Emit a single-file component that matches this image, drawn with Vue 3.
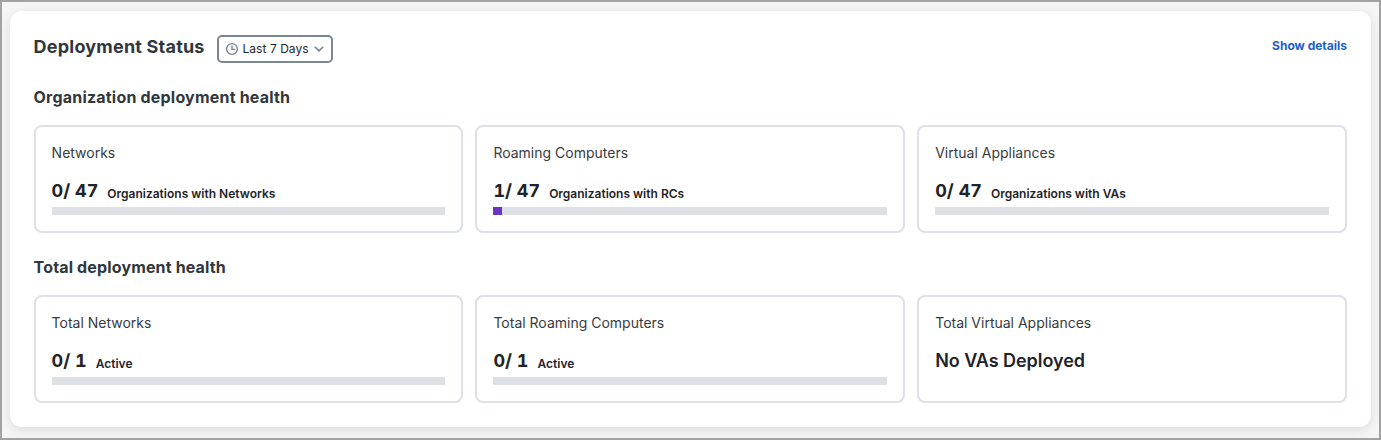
<script setup>
const sections = [
  {
    title: 'Organization deployment health',
    kind: 'organization',
    cards: [
      { name: 'Networks', count: 0, total: 47, label: 'Organizations with Networks' },
      { name: 'Roaming Computers', count: 1, total: 47, label: 'Organizations with RCs' },
      { name: 'Virtual Appliances', count: 0, total: 47, label: 'Organizations with VAs' },
    ],
  },
  {
    title: 'Total deployment health',
    kind: 'total',
    cards: [
      { name: 'Total Networks', count: 0, total: 1, label: 'Active' },
      { name: 'Total Roaming Computers', count: 0, total: 1, label: 'Active' },
      { name: 'Total Virtual Appliances', empty: 'No VAs Deployed' },
    ],
  },
]

const fill = (card) => `${(card.count / card.total) * 100}%`
</script>

<template>
  <main class="frame">
    <section class="panel">
      <header class="header">
        <h1 class="title">Deployment Status</h1>
        <button class="range" type="button">
          <svg class="clock" viewBox="0 0 14 14" width="14" height="14" fill="none">
            <circle cx="7" cy="7" r="5.4" />
            <path d="M7 3.4V7.4H10.3" />
          </svg>
          <span class="range-text">Last 7 Days</span>
          <svg class="chevron" viewBox="0 0 10 6" width="10" height="6" fill="none">
            <path d="M0.8 0.7L5 4.9L9.2 0.7" />
          </svg>
        </button>
        <a class="details">Show details</a>
      </header>

      <section v-for="section in sections" :key="section.title" class="group">
        <h2 class="subtitle" :class="section.kind">{{ section.title }}</h2>
        <div class="cards">
          <article v-for="card in section.cards" :key="card.name" class="card">
            <div class="name">{{ card.name }}</div>
            <div v-if="card.empty" class="figures"><span class="empty">{{ card.empty }}</span></div>
            <template v-else>
              <div class="figures">
                <span class="value">{{ card.count }}/ {{ card.total }}</span>
                <span class="label">{{ card.label }}</span>
              </div>
              <div class="track"><div class="bar" :style="{ width: fill(card) }"></div></div>
            </template>
          </article>
        </div>
      </section>
    </section>
  </main>
</template>

<style>
body {
  margin: 0;
}
</style>

<style scoped>
.frame {
  box-sizing: border-box;
  width: 100%;
  height: 440px;
  padding: 9px 8px;
  border: 2px solid #a2a2a2;
  background: #f5f5f5;
  font-family: Inter, "Liberation Sans", sans-serif;
  color: #1f2429;
  overflow: hidden;
}
.panel {
  box-sizing: border-box;
  height: 416px;
  padding: 24px 24px 0 23.6px;
  border-radius: 12px;
  background: #fff;
  box-shadow: 0 3px 12px rgba(0, 0, 0, 0.1);
}
.header {
  display: flex;
  height: 28px;
}
.title {
  margin: 0;
  font-size: 18px;
  font-weight: 700;
  line-height: 24px;
  width: 171.4px;
  letter-spacing: 0.21px;
  white-space: nowrap;
  color: #31373d;
}
.range {
  box-sizing: border-box;
  display: flex;
  align-items: center;
  width: 116px;
  height: 28px;
  margin: 0 0 0 12px;
  padding: 0 0 0 6px;
  border: 2px solid #7b8792;
  border-radius: 5px;
  background: #fff;
  font: 400 12px/16px Inter, sans-serif;
  letter-spacing: 0.05px;
  color: #23282e;
}
.range-text {
  width: 67px;
  margin-left: 3.5px;
  text-align: left;
  white-space: nowrap;
}
.clock,
.chevron {
  flex: none;
  stroke: #7b8792;
  stroke-width: 1.4;
}
.chevron {
  margin-left: 4.5px;
  stroke-width: 1.6;
}
.details {
  margin-left: auto;
  font-size: 12px;
  font-weight: 700;
  line-height: 22px;
  color: #1d5fc9;
}
.group {
  height: 170px;
}
.subtitle {
  box-sizing: border-box;
  height: 62px;
  margin: 0;
  padding-top: 22px;
  font-size: 16px;
  font-weight: 700;
  line-height: 24px;
  color: #31373d;
}
.subtitle.organization {
  letter-spacing: 0.2px;
}
.subtitle.total {
  letter-spacing: 0.15px;
}
.cards {
  display: grid;
  grid-template-columns: repeat(3, 1fr);
  gap: 12px;
}
.card {
  box-sizing: border-box;
  height: 108px;
  padding: 16px;
  border: 2px solid #dde0e5;
  border-radius: 8px;
}
.name {
  font-size: 14px;
  line-height: 20px;
  color: #373c42;
}
.figures {
  display: flex;
  align-items: baseline;
  height: 24px;
  margin-top: 16px;
  line-height: 24px;
  white-space: nowrap;
}
.value,
.empty {
  font-size: 18px;
  font-weight: 600;
}
.value {
  font-weight: 700;
  font-variant-numeric: tabular-nums;
}
.empty {
  letter-spacing: -0.06px;
}
.label {
  position: relative;
  top: 1px;
  margin-left: 9px;
  font-size: 12px;
  font-weight: 600;
}
.track {
  height: 8px;
  margin-top: 4px;
  background: #dde0e5;
}
.bar {
  height: 8px;
  background: #6b35c1;
}
</style>
